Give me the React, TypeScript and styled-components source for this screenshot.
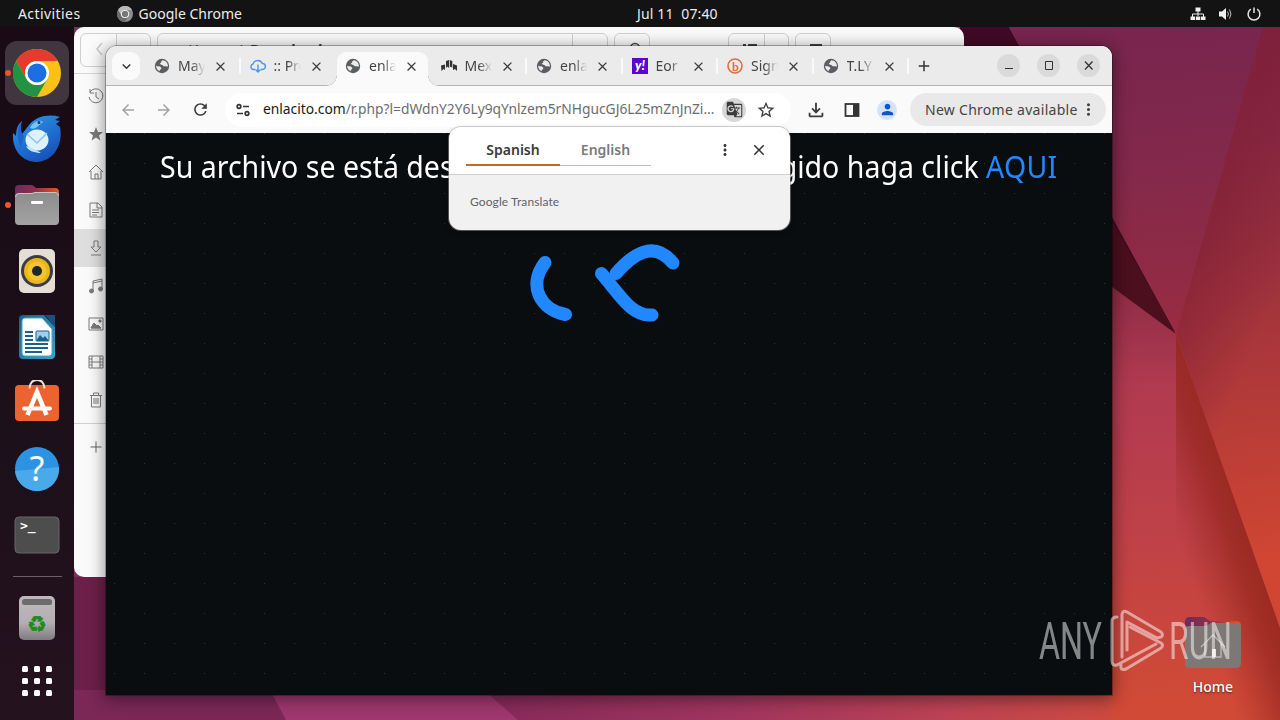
import React from "react";
import styled, { createGlobalStyle } from "styled-components";
import {
  MdAdd,
  MdArrowBack,
  MdArrowForward,
  MdClose,
  MdGTranslate,
  MdKeyboardArrowDown,
  MdMoreVert,
  MdOutlineFileDownload,
  MdPerson,
  MdRefresh,
  MdStarBorder,
} from "react-icons/md";

const GlobalStyle = createGlobalStyle`
  * {
    box-sizing: border-box;
  }
  body {
    margin: 0;
    overflow: hidden;
    font-family: "Noto Sans", "Open Sans", sans-serif;
  }
  svg {
    display: block;
    flex: none;
  }
`;

const Desktop = styled.div`
  position: relative;
  width: 1280px;
  height: 720px;
  overflow: hidden;
  display: flex;
  flex-direction: column;
`;

const WallpaperLayer = styled.div`
  position: absolute;
  inset: 0;
`;

const Label = styled.span<{ $spacing?: number }>`
  letter-spacing: ${(p) => p.$spacing || 0}px;
  white-space: pre;
`;

/* top bar */

const TopBar = styled.header`
  position: relative;
  z-index: 5;
  height: 27px;
  display: grid;
  grid-template-columns: 619px auto 1fr;
  align-items: center;
  padding: 0 18px;
  background: #131313;
  color: #ececec;
  font-size: 14px;
  line-height: 27px;
`;

const TopGroup = styled.div<{ $end?: boolean; $gap: number }>`
  display: flex;
  align-items: center;
  justify-content: ${(p) => (p.$end ? "flex-end" : "flex-start")};
  gap: ${(p) => p.$gap}px;
`;

const AppName = styled.div`
  display: flex;
  align-items: center;
  gap: 6px;
`;

/* dock */

const Dock = styled.nav`
  position: relative;
  z-index: 1;
  width: 74px;
  flex: 1;
  display: flex;
  flex-direction: column;
  align-items: center;
  padding-top: 13px;
  background: linear-gradient(#190a15, #1c101a 60%, #25121f);
`;

const DockItem = styled.div<{ $running?: boolean }>`
  position: relative;
  width: 74px;
  height: 66px;
  display: flex;
  align-items: center;
  justify-content: center;

  &::before {
    content: "";
    position: absolute;
    left: 5px;
    top: 30px;
    width: 6px;
    height: 6px;
    border-radius: 50%;
    background: ${(p) => (p.$running ? "#e8562a" : "transparent")};
  }
`;

const DockTile = styled.div<{ $active?: boolean }>`
  width: 64px;
  height: 64px;
  border-radius: 12px;
  display: flex;
  align-items: center;
  justify-content: center;
  background: ${(p) => (p.$active ? "#413640" : "transparent")};
`;

const DockDivider = styled.div`
  width: 49px;
  height: 1px;
  margin: 8px 0;
  background: #6b6068;
`;

const AppsGrid = styled.div`
  display: grid;
  grid-template-columns: repeat(3, 6px);
  gap: 6px;
  margin-top: 15px;

  i {
    width: 6px;
    height: 6px;
    border-radius: 1.5px;
    background: #fff;
  }
`;

/* file manager */

const FilesWindow = styled.section`
  position: absolute;
  left: 74px;
  top: 27px;
  width: 890px;
  height: 550px;
  border-radius: 10px;
  background: #fafafa;
  overflow: hidden;
`;

const FilesHeader = styled.div`
  height: 47px;
  display: flex;
  padding: 6px 6px 0;
  border-bottom: 1px solid #d6d6d6;
`;

const FilesButton = styled.div<{ $width: number; $split?: number; $gap: number }>`
  width: ${(p) => p.$width}px;
  height: 34px;
  margin-right: ${(p) => p.$gap}px;
  border: 1px solid #cfcfcf;
  border-radius: 6px;
  display: flex;
  align-items: center;
  background: ${(p) =>
    p.$split
      ? `linear-gradient(#cfcfcf, #cfcfcf) ${p.$split}px 0 / 1px 100% no-repeat`
      : "none"};
  color: #444;
  font-size: 14.5px;
  padding: 0 0 3px 14px;
`;

const FilesSidebar = styled.div`
  width: 44px;
  display: flex;
  flex-direction: column;
  padding-top: 3px;
`;

const SideItem = styled.div<{ $selected?: boolean }>`
  height: 38px;
  display: flex;
  align-items: center;
  padding-left: 14px;
  color: #7a7a7a;
  background: ${(p) => (p.$selected ? "#dedede" : "transparent")};
`;

const SideRule = styled.div`
  height: 1px;
  margin: 4px 0 4px;
  background: #d0d0d0;
`;

/* browser */

const ChromeWindow = styled.section`
  position: absolute;
  left: 106px;
  top: 46px;
  z-index: 2;
  width: 1006px;
  height: 649px;
  border-radius: 11px 11px 0 0;
  display: flex;
  flex-direction: column;
  background: #fafafa;
  box-shadow: 0 0 0 1px rgba(0, 0, 0, 0.28), 0 3px 16px 2px rgba(0, 0, 0, 0.42);
`;

const TabStrip = styled.div`
  height: 40px;
  display: flex;
  padding: 6px 12px 0 6px;
  border-radius: 11px 11px 0 0;
  background: linear-gradient(#b4b4b4, #b4b4b4) 0 39px / 100% 1px no-repeat,
    #ebebeb;
`;

const TabSearch = styled.div`
  width: 28px;
  height: 28px;
  margin-right: 4px;
  border-radius: 9px;
  display: flex;
  align-items: center;
  justify-content: center;
  background: #fafafa;
  color: #333;
`;

const TabItem = styled.div<{ $active?: boolean; $bar?: boolean }>`
  position: relative;
  width: 95.5px;
  display: flex;
  align-items: flex-start;
  padding: 6px 0 0 10px;

  &::after {
    content: "";
    position: absolute;
    right: -1px;
    top: 6px;
    width: 2px;
    height: 16px;
    background: ${(p) => (p.$bar ? "#fafafa" : "transparent")};
  }
  > * {
    position: relative;
  }
`;

const TabShape = styled.div`
  && {
    position: absolute;
    left: 2px;
    top: 0;
    width: 91px;
    height: 34px;
    border-radius: 9px 9px 0 0;
    background: #fafafa;
  }
  &::before,
  &::after {
    content: "";
    position: absolute;
    bottom: 0;
    width: 10px;
    height: 10px;
  }
  &::before {
    left: -10px;
    background: radial-gradient(circle at 0 0, #ebebeb 9px, #c4c4c4 9.5px, #fafafa 10px);
  }
  &::after {
    right: -10px;
    background: radial-gradient(circle at 100% 0, #ebebeb 9px, #c4c4c4 9.5px, #fafafa 10px);
  }
`;

const TabTitle = styled.span`
  width: 27px;
  height: 20px;
  margin: -1px 8px 0 8px;
  overflow: hidden;
  white-space: pre;
  font-size: 14px;
  line-height: 18px;
  color: #444;
  mask-image: linear-gradient(90deg, #000 50%, transparent);
`;

const TabClose = styled(MdClose)`
  margin-top: 1px;
  color: #3c3c3c;
`;

const NewTab = styled(MdAdd)`
  margin: 5px 0 0 7px;
  color: #333;
`;

const WindowButtons = styled.div`
  margin: 2px 0 0 auto;
  display: flex;
  gap: 17px;
`;

const WindowButton = styled.div`
  width: 23px;
  height: 23px;
  border-radius: 50%;
  background: #dadada;
`;

const Toolbar = styled.div`
  height: 47px;
  display: flex;
  align-items: center;
  padding: 0 6px 0 13px;
  background: #fafafa;
  color: #3c3c3c;
`;

const NavIcon = styled.div<{ $muted?: boolean }>`
  width: 18px;
  margin-right: 18px;
  color: ${(p) => (p.$muted ? "#a3a3a3" : "#3c3c3c")};
`;

const Omnibox = styled.div`
  width: 566px;
  height: 34px;
  margin-left: -2px;
  padding: 0 13px 0 10px;
  border-radius: 17px;
  display: flex;
  align-items: center;
  background: #fff;
`;

const Url = styled.div`
  width: 471px;
  padding: 0 0 2px 12px;
  font-size: 13.8px;
  line-height: 20px;
  color: #6d6d6d;
  white-space: pre;

  b {
    font-weight: 400;
    color: #1a1a1a;
  }
`;

const TranslateChip = styled.div`
  width: 24px;
  height: 24px;
  margin-right: 10px;
  border-radius: 50%;
  display: flex;
  align-items: center;
  justify-content: center;
  background: #d8d8d8;
`;

const ToolbarActions = styled.div`
  display: flex;
  align-items: center;
  gap: 17px;
  margin-left: 14px;
`;

const Avatar = styled.div`
  width: 20px;
  height: 20px;
  border-radius: 50%;
  display: flex;
  align-items: center;
  justify-content: center;
  background: #d3e3fd;
  color: #0b57d0;
`;

const UpdatePill = styled.div`
  width: 196px;
  height: 33px;
  margin-left: auto;
  padding: 0 8px 1px 15px;
  border-radius: 17px;
  display: flex;
  align-items: center;
  justify-content: space-between;
  background: #e9e9e9;
  font-size: 14px;
  color: #444;
`;

const Page = styled.main`
  position: relative;
  flex: 1;
  overflow: hidden;
  background: radial-gradient(circle at 0.5px 0.5px, #2b363a 0.8px, transparent 1px) 8px 0 / 30px 30px,
    #0a0d0f;
`;

const PageMessage = styled.h1`
  margin: 12px 0 0 54px;
  font-size: 30.5px;
  font-weight: 400;
  line-height: 42px;
  color: #fff;
  white-space: nowrap;
  transform: scaleX(0.935);
  transform-origin: 0 0;

  a {
    color: #2188ff;
    letter-spacing: 0.2px;
  }
`;

const Loader = styled.svg`
  margin: 52px 0 0 414px;
`;

/* translate bubble */

const Bubble = styled.aside`
  position: absolute;
  left: 343px;
  top: 81px;
  width: 341px;
  height: 103px;
  border-radius: 12px;
  overflow: hidden;
  background: #f1f1f1;
  box-shadow: 0 0 0 1px rgba(160, 160, 160, 0.5), 0 2px 6px rgba(0, 0, 0, 0.2);
`;

const BubbleHeader = styled.div`
  height: 48px;
  display: flex;
  align-items: center;
  padding: 0 22px 1px 17px;
  background: #fff;
  border-bottom: 1px solid #cfcfcf;
`;

const Language = styled.div<{ $active?: boolean; $width: number }>`
  width: ${(p) => p.$width}px;
  height: 32px;
  text-align: center;
  line-height: 31px;
  font-size: 14px;
  font-weight: 600;
  color: ${(p) => (p.$active ? "#3a3a3a" : "#7a7a80")};
  box-shadow: inset 0 ${(p) => (p.$active ? "-2px #c8691f" : "-1px #bdbdbd")};
`;

const BubbleActions = styled.div`
  margin-left: auto;
  display: flex;
  align-items: center;
  gap: 16px;
  color: #333;
`;

const Brand = styled.div`
  padding: 17px 0 0 21px;
  font-family: "Lato", "Open Sans", sans-serif;
  font-size: 12px;
  letter-spacing: 0.1px;
  line-height: 20px;
  color: #5f6368;
`;

/* desktop extras */

const HomeShortcut = styled.div`
  position: absolute;
  left: 1173px;
  top: 614px;
  width: 80px;
  display: flex;
  flex-direction: column;
  align-items: center;
  gap: 7px;
  font-size: 14px;
  font-weight: 500;
  line-height: 20px;
  color: #fff;
  text-shadow: 0 1px 2px rgba(0, 0, 0, 0.6);
`;

const Watermark = styled.svg`
  position: absolute;
  left: 1030px;
  top: 600px;
  z-index: 6;
  opacity: 0.5;
`;

const Wallpaper = () => (
  <WallpaperLayer>
    <svg width="1280" height="720" viewBox="0 0 1280 720">
      <defs>
        <linearGradient id="base" gradientUnits="userSpaceOnUse" x1="480" y1="0" x2="1112" y2="0">
          <stop offset="0" stopColor="#852a5a" />
          <stop offset="0.4" stopColor="#a0355e" />
          <stop offset="0.75" stopColor="#bd4354" />
          <stop offset="1" stopColor="#cc4a40" />
        </linearGradient>
        <linearGradient id="top" gradientUnits="userSpaceOnUse" x1="1140" y1="27" x2="1170" y2="330">
          <stop offset="0" stopColor="#78254f" />
          <stop offset="0.5" stopColor="#84294a" />
          <stop offset="1" stopColor="#982c42" />
        </linearGradient>
        <linearGradient id="right" gradientUnits="userSpaceOnUse" x1="1230" y1="40" x2="1290" y2="560">
          <stop offset="0" stopColor="#80264a" />
          <stop offset="0.4" stopColor="#98303e" />
          <stop offset="1" stopColor="#d14632" />
        </linearGradient>
        <linearGradient id="rightEdge" gradientUnits="userSpaceOnUse" x1="1195" y1="250" x2="1280" y2="285">
          <stop offset="0" stopColor="#7e1d35" stopOpacity="0.6" />
          <stop offset="1" stopColor="#7e1d35" stopOpacity="0" />
        </linearGradient>
        <linearGradient id="lower" gradientUnits="userSpaceOnUse" x1="1140" y1="280" x2="1150" y2="700">
          <stop offset="0" stopColor="#8c2b45" />
          <stop offset="0.25" stopColor="#b03a50" />
          <stop offset="0.6" stopColor="#bf4148" />
          <stop offset="1" stopColor="#d04a36" />
        </linearGradient>
        <linearGradient id="fold" gradientUnits="userSpaceOnUse" x1="1186" y1="566" x2="1262" y2="540">
          <stop offset="0" stopColor="#a32d2b" stopOpacity="0" />
          <stop offset="0.6" stopColor="#982820" stopOpacity="0.75" />
          <stop offset="1" stopColor="#96281f" />
        </linearGradient>
      </defs>
      <rect width="1280" height="720" fill="url(#base)" />
      <path d="M74 577H106V695H300L300 720H74Z" fill="#6b1f49" />
      <path d="M74 690H280L290 720H74Z" fill="#7b2857" />
      <path d="M270 690H484L518 720H286Z" fill="#a0376f" />
      <path d="M960 27H1009L1180 334L1100 290V400H960Z" fill="#400a26" />
      <path d="M1009 27H1280V60L1176 334L1112 217Z" fill="url(#top)" />
      <path d="M1263 27H1280V629L1176 334Z" fill="url(#right)" />
      <path d="M1263 27H1280V629L1176 334Z" fill="url(#rightEdge)" />
      <path d="M1100 200L1176 334L1100 300Z" fill="#4c0f1e" />
      <path d="M1100 278L1176 334L1280 628V720H1112V690H1100Z" fill="url(#lower)" />
      <path d="M1176 334L1176 720H1280V628Z" fill="url(#fold)" />
    </svg>
  </WallpaperLayer>
);

const ChromeLogo = ({ size, mono }: { size: number; mono?: boolean }) => (
  <svg width={size} height={size} viewBox="0 0 48 48">
    <circle cx="24" cy="24" r="24" fill={mono ? "#8d8d8d" : "#fbc116"} />
    <path d="M3.2 12A24 24 0 0 1 44.8 12H24A12 12 0 0 0 13.6 30Z" fill={mono ? "#b9b9b9" : "#e33b2e"} />
    <path d="M3.2 12A24 24 0 0 0 24 48L34.4 30A12 12 0 0 1 13.6 30Z" fill={mono ? "#6d6d6d" : "#229342"} />
    <circle cx="24" cy="24" r="12" fill="#fff" />
    <circle cx="24" cy="24" r="9.5" fill={mono ? "#777" : "#1b6ee4"} />
  </svg>
);

const ThunderbirdIcon = () => (
  <svg width="50" height="50" viewBox="0 0 50 50">
    <defs>
      <linearGradient id="bird" x1="0" y1="0" x2="0.6" y2="1">
        <stop offset="0" stopColor="#2f9af0" />
        <stop offset="1" stopColor="#1653b8" />
      </linearGradient>
    </defs>
    <path
      d="M10 7C7 13 8 18 10 20C15 15 17 8 26 4C34 1 41 1 48 3L43 6L48 7L44 10L48 13C51 28 44 46 26 48C9 48 0 35 1 19L4 22C4 15 6 10 10 7Z"
      fill="url(#bird)"
    />
    <path d="M10 7C8 14 9 19 12 22L9 33C4 24 5 13 10 7Z" fill="#1d64cc" />
    <path d="M18 14C21 8 27 5 31 8L25 13C23 15 20 15 18 14Z" fill="#75c4f5" />
    <circle cx="27" cy="8.500" r="1.500" fill="#12387c" />
    <ellipse cx="25" cy="26" rx="11.500" ry="10.500" fill="#dff1fb" />
    <path d="M15 20L25 29L35 19" fill="none" stroke="#8ec4e6" strokeWidth="1.500" />
    <path d="M14 32C20 34 25 36 29 39C23 39 16 37 14 32Z" fill="#bfe2f7" />
  </svg>
);

const FolderIcon = () => (
  <svg width="46" height="42" viewBox="0 0 46 42">
    <defs>
      <linearGradient id="folderTop" x1="0" x2="1">
        <stop offset="0" stopColor="#6b2c5f" />
        <stop offset="0.45" stopColor="#8d2f49" />
        <stop offset="1" stopColor="#e95420" />
      </linearGradient>
      <linearGradient id="folderBody" x1="0" y1="0" x2="0" y2="1">
        <stop offset="0" stopColor="#8c8c8c" />
        <stop offset="1" stopColor="#a3a3a3" />
      </linearGradient>
    </defs>
    <path d="M1 5Q1 1 5 1H17Q19 1 21 3L22 4H41Q45 4 45 8V20H1Z" fill="url(#folderTop)" />
    <path d="M1 13Q1 9 5 9H17Q19 9 21 8H41Q45 8 45 12V37Q45 41 41 41H5Q1 41 1 37Z" fill="url(#folderBody)" />
    <path d="M1.500 13Q1.500 9.500 5 9.500H17Q19 9.500 21 8.500H41Q44.500 8.500 44.500 12" fill="none" stroke="#c5c5c5" />
    <rect x="17" y="17" width="12" height="3" rx="1" fill="#fff" />
  </svg>
);

const SpeakerIcon = () => (
  <svg width="38" height="46" viewBox="0 0 38 46">
    <rect x="1" y="1" width="36" height="44" rx="5" fill="#e4ded4" />
    <circle cx="19" cy="23" r="16" fill="#3a3d46" />
    <circle cx="19" cy="23" r="13" fill="#e9b61c" />
    <circle cx="19" cy="23" r="9.500" fill="#f3c52f" />
    <circle cx="19" cy="23" r="5" fill="#22252c" />
  </svg>
);

const WriterIcon = () => (
  <svg width="38" height="46" viewBox="0 0 38 46">
    <defs>
      <linearGradient id="doc" x1="0" y1="0" x2="1" y2="1">
        <stop offset="0" stopColor="#17608c" />
        <stop offset="1" stopColor="#3fa0c8" />
      </linearGradient>
    </defs>
    <path d="M5 1H26L37 13V41Q37 45 33 45H5Q1 45 1 41V5Q1 1 5 1Z" fill="url(#doc)" />
    <path d="M7 4H24L34 15V39Q34 42 31 42H7Q4 42 4 39V7Q4 4 7 4Z" fill="#fff" stroke="#4aa6c8" />
    <path d="M27 1H37V13Z" fill="#15527d" />
    <path d="M7 18h8M7 22h8M7 26h8M7 30h23M7 34h23M7 38h17" stroke="#1b618f" strokeWidth="2" />
    <rect x="18" y="17" width="13" height="10" rx="1" fill="#9fd0ea" stroke="#1b618f" />
    <path d="M18 27l4-6 3 3 2-2 4 5z" fill="#1b618f" />
  </svg>
);

const StoreIcon = () => (
  <svg width="46" height="46" viewBox="0 0 46 46">
    <rect x="1" y="5" width="44" height="36" rx="4" fill="#ec6332" />
    <path d="M15.500 8.500C15.500 -3 30.500 -3 30.500 8.500" fill="none" stroke="#f0dfd4" strokeWidth="2" />
    <path d="M13.500 35L23 12L32.500 35" fill="none" stroke="#fff" strokeWidth="4.500" />
    <path d="M10 28.500H36" stroke="#fff" strokeWidth="4" strokeLinecap="round" />
  </svg>
);

const HelpIcon = () => (
  <svg width="46" height="46" viewBox="0 0 46 46" overflow="visible">
    <circle cx="23" cy="23" r="22" fill="#2d92e2" />
    <path d="M1 25A22 22 0 0 0 45 21Z" fill="#4aaae9" />
    <text x="23" y="35" textAnchor="middle" fontFamily="Noto Sans" fontSize="34" fill="#fff">
      ?
    </text>
  </svg>
);

const TerminalIcon = () => (
  <svg width="46" height="38" viewBox="0 0 46 38">
    <rect x="1" y="1" width="44" height="36" rx="4" fill="#4d4d4d" stroke="#666" />
    <text x="6" y="14" fontFamily="DejaVu Sans Mono" fontSize="13" fontWeight="700" fill="#fff">
      {">_"}
    </text>
  </svg>
);

const TrashIcon = () => (
  <svg width="38" height="46" viewBox="0 0 38 46">
    <defs>
      <linearGradient id="bin" x1="0" y1="0" x2="0" y2="1">
        <stop offset="0" stopColor="#bcb9bc" />
        <stop offset="0.6" stopColor="#b3afb3" />
        <stop offset="1" stopColor="#7f7b7f" />
      </linearGradient>
    </defs>
    <rect x="1" y="1" width="36" height="44" rx="5" fill="url(#bin)" />
    <rect x="4" y="4" width="30" height="6" rx="2.500" fill="#6d6a6d" />
    <text x="19" y="37" textAnchor="middle" fontFamily="DejaVu Sans" fontSize="22" fill="#1f8a1f" stroke="#1f8a1f" strokeWidth="0.600">
      ♻
    </text>
  </svg>
);

const Globe = () => (
  <svg width="16" height="16" viewBox="0 0 16 16">
    <circle cx="8" cy="8" r="7.200" fill="#5a5d61" />
    <path d="M8.500 2.200C8 3 7 3 7.200 4.200C7.300 5.200 5.600 4.800 5.800 6.200C5.900 7 8.500 6.500 9 7.400C9.500 8.300 10.500 8.200 11.500 8.200C12.600 8.200 13 8.600 14 8.600C14 4.800 11.500 2.300 8.500 2.200Z" fill="#ebebeb" />
    <path d="M2.100 7.600C2.500 8.600 5.500 8 6.800 9.200C8 10.300 7 11.500 6 11.600C5.500 12 6 13 5.600 13.300C3.500 12.400 2 10.200 2.100 7.600Z" fill="#ebebeb" />
  </svg>
);

const CloudIcon = () => (
  <svg width="16" height="16" viewBox="0 0 16 16" fill="none" stroke="#4c94ea" strokeWidth="1.400">
    <path d="M5.500 11.500H3.500A2.800 2.800 0 0 1 3 6A5 5 0 0 1 12.300 5.500A3 3 0 0 1 12.500 11.500H10.500" />
    <path d="M8 6.500V14M5.800 11.800L8 14L10.200 11.800" />
  </svg>
);

const PeopleIcon = () => (
  <svg width="16" height="16" viewBox="0 0 16 16" fill="#333">
    <path d="M0 7.500L4 6.500V12L2.500 11L0.500 13ZM5 3L8 2V10L6.500 8.500L5 10ZM8.800 2L11.300 3V10L10 8.500L8.800 9.500ZM12 6L16 7.500V13L14 11L12 12Z" />
  </svg>
);

const YahooIcon = () => (
  <svg width="16" height="16" viewBox="0 0 16 16">
    <rect width="16" height="16" fill="#5f01d1" />
    <text x="3" y="11.500" fontFamily="Lato" fontSize="13" fontWeight="900" fill="#fff" fontStyle="italic">
      y!
    </text>
  </svg>
);

const BitlyIcon = () => (
  <svg width="16" height="16" viewBox="0 0 16 16">
    <circle cx="8" cy="8" r="7" fill="none" stroke="#e26b43" strokeWidth="1.600" />
    <text x="5" y="12.500" fontFamily="Lato" fontSize="12" fontWeight="700" fill="#e26b43">
      b
    </text>
  </svg>
);

const tabs = [
  { title: "Mayo", icon: <Globe />, bar: true },
  { title: ":: Pro", icon: <CloudIcon /> },
  { title: "enlac", icon: <Globe />, active: true },
  { title: "Mexi", icon: <PeopleIcon />, bar: true },
  { title: "enlac", icon: <Globe />, bar: true },
  { title: "Eor", icon: <YahooIcon />, bar: true },
  { title: "Sign", icon: <BitlyIcon />, bar: true },
  { title: "T.LY", icon: <Globe />, bar: true },
];

const sidePaths = [
  "M2 4A7 7 0 1 1 1 9M2 1V5H6M8 4V9L11 11",
  "",
  "M1 8L8 1L15 8M3 7V15H13V7M7 15V10H10V15",
  "M2 1H10L14 5V15H2ZM9 1V6H14M4 8H11M4 10.500H11M4 13H9",
  "M6 1H10V7H13L8 12L3 7H6ZM3 15H13",
  "M5 13V3L14 1V11M5 5L14 3",
  "M1 2H15V14H1ZM3 12L6 7L9 10L10 9L13 12Z",
  "M1 2H15V14H1ZM4 2V14M12 2V14M4 8H12M1 5H4M1 8H4M1 11H4M12 5H15M12 8H15M12 11H15",
  "M2 3.500H14M5.500 3V1H10.500V3M3.500 4V15H12.500V4M6 6V12M8 6V12M10 6V12",
];

const SideIcon = ({ index }: { index: number }) => (
  <svg width="16" height="16" viewBox="0 0 16 16" fill="none" stroke="currentColor">
    {index === 1 ? (
      <path d="M8 1l2 5h5l-4 3.500 1.500 5L8 11.500 3.500 14.500 5 9.500 1 6h5z" fill="currentColor" stroke="none" />
    ) : (
      <path d={sidePaths[index]} />
    )}
    {index === 5 && (
      <>
        <circle cx="3.500" cy="13" r="2" fill="currentColor" />
        <circle cx="12.500" cy="11" r="2" fill="currentColor" />
      </>
    )}
    {index === 6 && <path d="M3 12l3-5 3 3 1-1 3 3zM11 4h2v2h-2z" fill="currentColor" />}
  </svg>
);

const Files = () => (
  <FilesWindow>
    <FilesHeader>
      <FilesButton $width={71} $split={35} $gap={6}>
        <svg width="10" height="14" viewBox="0 0 10 14" fill="none" stroke="#ccc" strokeWidth="1.500">
          <path d="M7 1L2 7L7 13" />
        </svg>
      </FilesButton>
      <FilesButton $width={451} $split={414} $gap={6}>
        <Label>⌂  Home  /  <b>Downloads</b></Label>
      </FilesButton>
      <FilesButton $width={36} $gap={78}>
        <svg width="14" height="14" viewBox="0 0 14 14" fill="none" stroke="#444" strokeWidth="1.500">
          <circle cx="6" cy="6" r="4.500" />
          <path d="M9 9L13 13" />
        </svg>
      </FilesButton>
      <FilesButton $width={61} $split={35} $gap={6}>
        <svg width="14" height="12" viewBox="0 0 14 12" stroke="#444" strokeWidth="2">
          <path d="M0 2H3M5 2H14M0 6H3M5 6H14" />
        </svg>
      </FilesButton>
      <FilesButton $width={36} $gap={0}>
        <svg width="12" height="12" viewBox="0 0 12 12" stroke="#444" strokeWidth="2">
          <path d="M0 2H12M0 6H12M0 10H12" />
        </svg>
      </FilesButton>
    </FilesHeader>
    <FilesSidebar>
      {sidePaths.map((_, i) => (
        <SideItem key={i} $selected={i === 4}>
          <SideIcon index={i} />
        </SideItem>
      ))}
      <SideRule />
      <SideItem>
        <svg width="16" height="16" viewBox="0 0 16 16" stroke="#666">
          <path d="M2.500 8H13.500M8 2.500V13.500" />
        </svg>
      </SideItem>
    </FilesSidebar>
  </FilesWindow>
);

const TranslateBubble = () => (
  <Bubble>
    <BubbleHeader>
      <Language $active $width={94}>
        <Label>Spanish</Label>
      </Language>
      <Language $width={91}>
        <Label>English</Label>
      </Language>
      <BubbleActions>
        <MdMoreVert size={18} />
        <MdClose size={18} />
      </BubbleActions>
    </BubbleHeader>
    <Brand>Google Translate</Brand>
  </Bubble>
);

const Browser = () => (
  <ChromeWindow>
    <TabStrip>
      <TabSearch>
        <MdKeyboardArrowDown size={17} />
      </TabSearch>
      {tabs.map((tab, i) => (
        <TabItem key={i} $active={tab.active} $bar={tab.bar}>
          {tab.active && <TabShape />}
          {tab.icon}
          <TabTitle>{tab.title}</TabTitle>
          <TabClose size={15} />
        </TabItem>
      ))}
      <NewTab size={18} />
      <WindowButtons>
        <WindowButton>
          <svg width="23" height="23" stroke="#333">
            <path d="M8 14.500H16" />
          </svg>
        </WindowButton>
        <WindowButton>
          <svg width="23" height="23" stroke="#333" fill="none">
            <path d="M8.500 7.500H15.500V15.500H8.500Z" />
          </svg>
        </WindowButton>
        <WindowButton>
          <svg width="23" height="23" stroke="#333" strokeWidth="1.300">
            <path d="M8 7.500L15.500 15.500M15.500 7.500L8 15.500" />
          </svg>
        </WindowButton>
      </WindowButtons>
    </TabStrip>
    <Toolbar>
      <NavIcon $muted>
        <MdArrowBack size={18} />
      </NavIcon>
      <NavIcon $muted>
        <MdArrowForward size={18} />
      </NavIcon>
      <NavIcon>
        <MdRefresh size={19} />
      </NavIcon>
      <Omnibox>
        <svg width="16" height="16" viewBox="0 0 16 16" fill="none" stroke="#333" strokeWidth="1.700">
          <circle cx="4" cy="4.500" r="1.800" />
          <path d="M8 4.500H14M2 11.500H8" />
          <circle cx="12" cy="11.500" r="1.800" />
        </svg>
        <Url>
          <Label>
            <b>enlacito.com</b>/r.php?l=dWdnY2Y6Ly9qYnlzem5rNHgucGJ6L25mZnJnZi…
          </Label>
        </Url>
        <TranslateChip>
          <MdGTranslate size={17} />
        </TranslateChip>
        <MdStarBorder size={20} />
      </Omnibox>
      <ToolbarActions>
        <MdOutlineFileDownload size={22} />
        <svg width="16" height="16" viewBox="0 0 16 16">
          <rect x="1.500" y="2" width="13" height="12" fill="none" stroke="#333" strokeWidth="1.800" />
          <rect x="9" y="2" width="6" height="12" fill="#333" />
        </svg>
        <Avatar>
          <MdPerson size={17} />
        </Avatar>
      </ToolbarActions>
      <UpdatePill>
        <Label $spacing={0.28}>New Chrome available</Label>
        <MdMoreVert size={19} />
      </UpdatePill>
    </Toolbar>
    <Page>
      <PageMessage>
        <Label>
          Su archivo se está des<Label $spacing={0.2}>cargando, si no es rediri</Label>gido haga click <a>AQUI</a>
        </Label>
      </PageMessage>
      <Loader width="170" height="90" viewBox="520 239 170 90" fill="none" stroke="#2188ff" strokeWidth="13" strokeLinecap="round">
        <path d="M545 262.500C527 286 541 310 565.500 314.500" />
        <path d="M601.500 273.500C620 295 632 317 652 315" />
        <path d="M616 273.500C632 255 653 239 673 263" />
      </Loader>
    </Page>
    <TranslateBubble />
  </ChromeWindow>
);

const App = () => (
  <Desktop>
    <GlobalStyle />
    <Wallpaper />
    <TopBar>
      <TopGroup $gap={36}>
        <Label $spacing={0.42}>Activities</Label>
        <AppName>
          <ChromeLogo size={16} mono />
          <Label>Google Chrome</Label>
        </AppName>
      </TopGroup>
      <Label $spacing={0.15}>Jul 11  07:40</Label>
      <TopGroup $end $gap={12}>
        <svg width="16" height="16" viewBox="0 0 16 16" fill="#f0f0f0">
          <path d="M5.500 1.500h5v4h-5zM0.500 10.500h4.500v3.500h-4.500zM5.800 10.500h4.500v3.500h-4.500zM11 10.500h4.500v3.500h-4.500z" />
          <path d="M8 5V10M2.500 11V8H13.500V11" fill="none" stroke="#f0f0f0" />
        </svg>
        <svg width="16" height="16" viewBox="0 0 16 16" fill="none" stroke="#bbb">
          <path d="M1 5.500H4L8 2V14L4 10.500H1Z" fill="#f0f0f0" stroke="none" />
          <path d="M9.500 5.500Q11.500 8 9.500 10.500M11.500 3.500Q14.500 8 11.500 12.500" />
        </svg>
        <svg width="16" height="16" viewBox="0 0 16 16" fill="none" stroke="#e4e4e4" strokeWidth="1.500">
          <path d="M8 1.500V7M4.800 3.200A5.900 5.900 0 1 0 11.200 3.200" />
        </svg>
      </TopGroup>
    </TopBar>
    <Dock>
      <DockItem $running>
        <DockTile $active>
          <ChromeLogo size={48} />
        </DockTile>
      </DockItem>
      <DockItem>
        <ThunderbirdIcon />
      </DockItem>
      <DockItem $running>
        <FolderIcon />
      </DockItem>
      <DockItem>
        <SpeakerIcon />
      </DockItem>
      <DockItem>
        <WriterIcon />
      </DockItem>
      <DockItem>
        <StoreIcon />
      </DockItem>
      <DockItem>
        <HelpIcon />
      </DockItem>
      <DockItem>
        <TerminalIcon />
      </DockItem>
      <DockDivider />
      <DockItem>
        <TrashIcon />
      </DockItem>
      <AppsGrid>
        {Array.from({ length: 9 }).map((_, i) => (
          <i key={i} />
        ))}
      </AppsGrid>
    </Dock>
    <Files />
    <Browser />
    <HomeShortcut>
      <svg width="58" height="56" viewBox="0 0 58 56">
        <path d="M1 8Q1 3 6 3H20L26 7H52Q57 7 57 12V30H1Z" fill="url(#folderTop)" />
        <path d="M1 15Q1 12 5 12H22L27 9H53Q57 9 57 13V49Q57 54 52 54H6Q1 54 1 49Z" fill="#7d7776" />
        <path d="M17 33L29 21L41 33M21 30V43H37V30" fill="none" stroke="#bdb8b6" strokeWidth="1.300" />
        <path d="M28 35H32V43H28Z" fill="#e8e5e4" />
      </svg>
      <Label>Home</Label>
    </HomeShortcut>
    <Watermark width="210" height="80" viewBox="1030 600 210 80" fill="#fff">
      <g fontFamily="Roboto" fontSize="52" fontWeight="400">
        <text x="1039" y="659" textLength="63" lengthAdjust="spacingAndGlyphs">
          ANY
        </text>
        <text x="1169" y="659" textLength="63" lengthAdjust="spacingAndGlyphs">
          RUN
        </text>
      </g>
      <g fill="none" stroke="#fff" strokeWidth="3" strokeLinejoin="round" strokeLinecap="round">
        <path d="M1117 617Q1112 617 1112 621V661Q1112 666 1117 665L1156 644" />
        <path d="M1122 657V614Q1123 610 1127 612L1161 632Q1164 635 1161 637L1157 638L1127 622V650" />
        <path d="M1121 665Q1120 671 1126 669L1161 648Q1164 645 1161 643L1130 627" />
      </g>
    </Watermark>
  </Desktop>
);

export default App;
